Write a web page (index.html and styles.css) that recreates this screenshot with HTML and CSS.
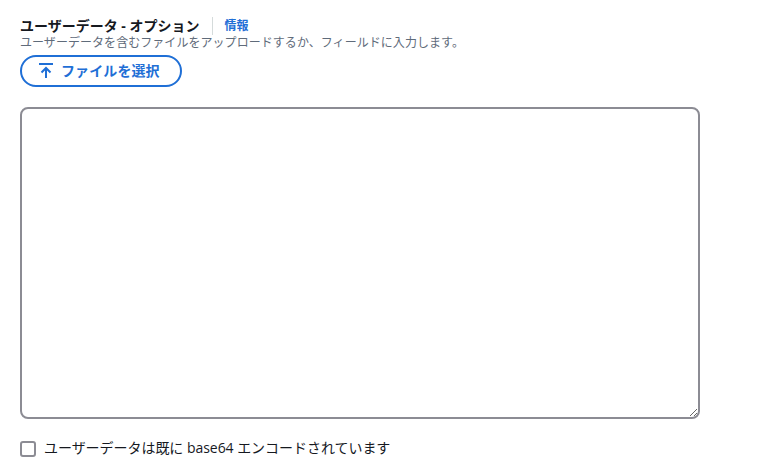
FILE: index.html
```html
<!DOCTYPE html>
<html lang="ja">
<head>
  <meta charset="UTF-8">
  <meta name="viewport" content="width=device-width, initial-scale=1.0">
  <title>ユーザーデータ</title>
  <link rel="stylesheet" href="styles.css">
</head>
<body>
  <div class="field">
    <div class="label-row">
      <label class="label" for="user-data">ユーザーデータ - オプション</label>
      <a href="#" class="info-link">情報</a>
    </div>
    <p class="description">ユーザーデータを含むファイルをアップロードするか、フィールドに入力します。</p>

    <button type="button" class="upload-button">
      <svg class="upload-icon" width="16" height="16" viewBox="0 0 16 16" fill="none" stroke="currentColor" stroke-width="2">
        <path d="M1 1h14"/>
        <path d="M8 15V5"/>
        <path d="M3.5 9.5 8 5l4.5 4.5"/>
      </svg>
      <span class="upload-text">ファイルを選択</span>
    </button>

    <textarea id="user-data" class="data-input"></textarea>

    <label class="check-row">
      <input type="checkbox" class="check-box">
      <span class="check-text">ユーザーデータは既に base64 エンコードされています</span>
    </label>
  </div>
</body>
</html>
```

FILE: styles.css
```css
* {
  box-sizing: border-box;
  margin: 0;
  padding: 0;
}

body {
  font-family: 'Open Sans', 'Noto Sans CJK JP', sans-serif;
  background-color: #fff;
  color: #16191f;
  height: 100vh;
  overflow: hidden;
}

.field {
  width: 700px;
  margin-left: 20px;
  padding-top: 17px;
}

.label-row {
  display: flex;
  align-items: center;
  height: 18px;
}

.label {
  font-size: 14px;
  font-weight: bold;
  line-height: 18px;
}

.info-link {
  margin-left: 12px;
  padding-left: 12px;
  border-left: 1px solid #d5dbdb;
  font-size: 12px;
  font-weight: bold;
  line-height: 18px;
  color: #1f6fd6;
  text-decoration: none;
}

.description {
  font-size: 12px;
  line-height: 16px;
  letter-spacing: 0.05px;
  color: #5f6b7a;
}

.upload-button {
  display: flex;
  align-items: center;
  gap: 7px;
  width: 162px;
  height: 32px;
  margin-top: 4px;
  padding-left: 16px;
  border: 2px solid #1f6fd6;
  border-radius: 16px;
  background-color: #fff;
  color: #1f6fd6;
  font-family: inherit;
  font-size: 14px;
  font-weight: bold;
}

.upload-icon {
  flex: none;
}

.upload-text {
  padding-bottom: 2px;
  letter-spacing: 0.1px;
}

.data-input {
  display: block;
  width: 680px;
  height: 312px;
  margin-top: 20px;
  border: 2px solid #8c8c94;
  border-radius: 8px;
  outline: none;
  font-family: inherit;
  font-size: 14px;
}

.check-row {
  display: flex;
  align-items: center;
  gap: 8px;
  margin-top: 19px;
  font-size: 14px;
  line-height: 20px;
}

.check-text {
  padding-bottom: 2px;
  letter-spacing: -0.04px;
}

.check-box {
  appearance: none;
  width: 16px;
  height: 16px;
  border: 2px solid #8c8c94;
  border-radius: 3px;
  background-color: #fff;
}
```
